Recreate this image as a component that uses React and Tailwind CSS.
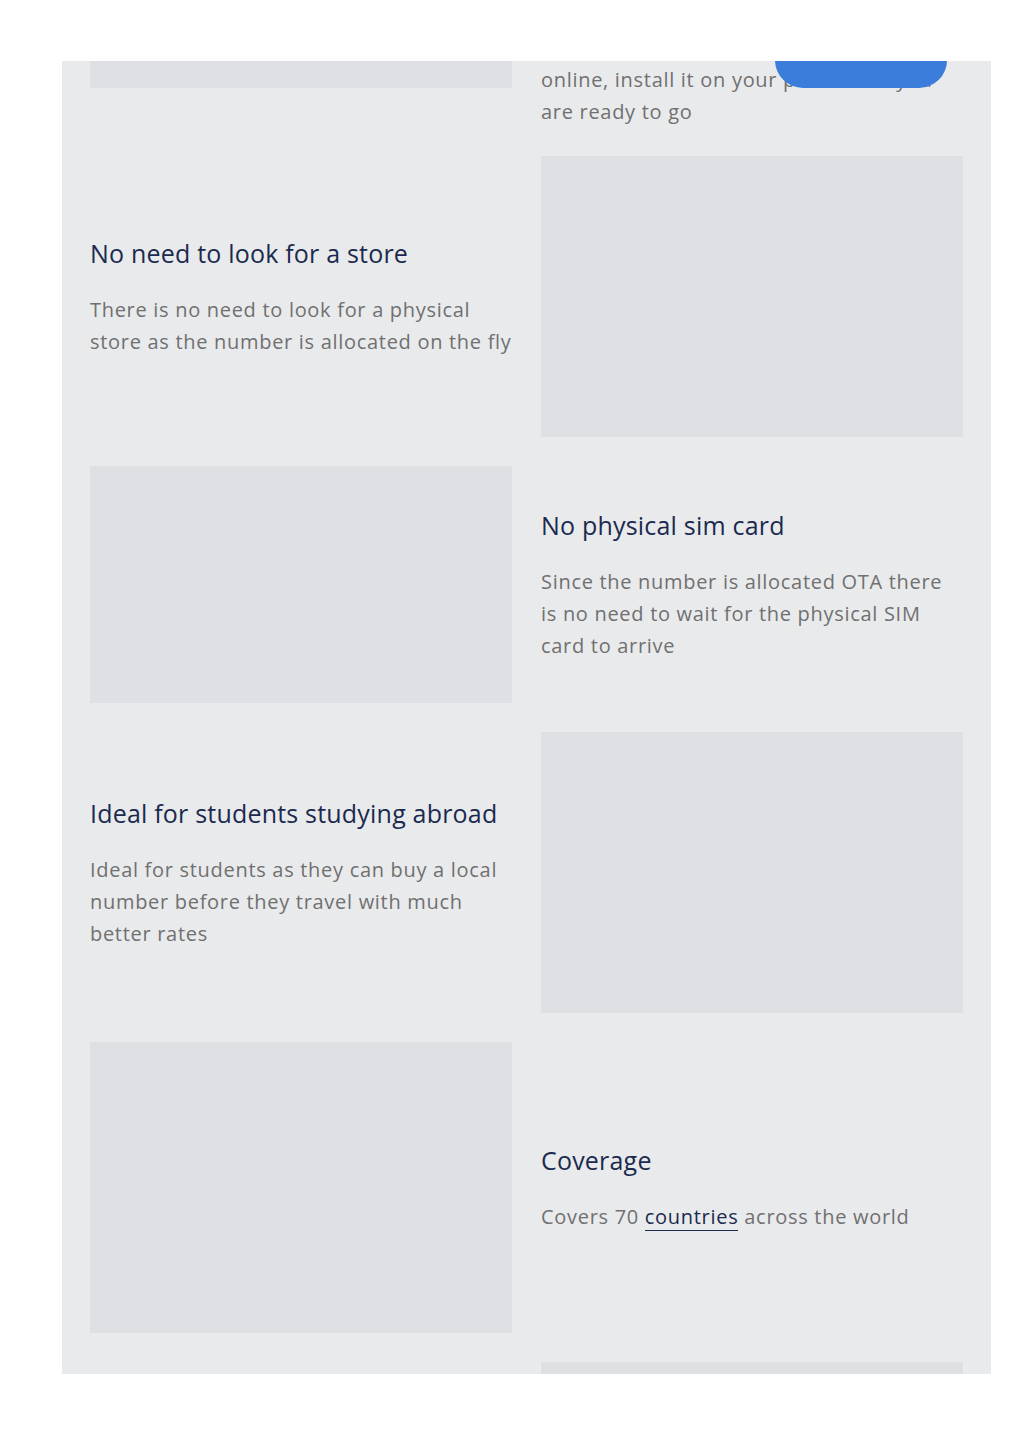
export default function App() {
  const font = { fontFamily: '"Open Sans", "Noto Sans", sans-serif' };
  const Title = ({ children }) => (
    <h3 className="text-[25px] leading-[36px] tracking-[0.2px] text-[#1b2a4e] font-normal">{children}</h3>
  );
  const Body = ({ lines }) => (
    <p className="mt-[23px] text-[20px] leading-[32px] tracking-[0.7px] text-[#707070] whitespace-nowrap">
      {lines.map((l, i) => (
        <span key={i} className="block">{l}</span>
      ))}
    </p>
  );
  const Box = ({ h }) => <div className={`w-[422px] bg-[#dfe0e3] ${h}`} />;

  return (
    <div className="w-[1024px] h-[1449px] bg-white" style={font}>
      <div className="pt-[61px] pl-[62px]">
        <div className="relative w-[929px] h-[1313px] overflow-hidden bg-[#e9eaec] px-[28px]">
          {/* row 0 (partial) */}
          <div className="flex gap-[29px] h-[66px]">
            <div className="w-[422px]">
              <div className="h-[27px] bg-[#dfe0e3]" />
            </div>
            <div className="w-[422px] pt-[3px] text-[20px] leading-[32px] tracking-[0.7px] text-[#707070] whitespace-nowrap">
              <p>online, install it on your phone and you</p>
              <p>are ready to go</p>
            </div>
          </div>

          <div className="mt-[29px] flex flex-col gap-[29px]">
            {/* row 1 */}
            <div className="flex gap-[29px] h-[281px]">
              <div className="w-[422px] flex flex-col justify-center">
                <Title>No need to look for a store</Title>
                <Body lines={["There is no need to look for a physical", "store as the number is allocated on the fly"]} />
              </div>
              <Box h="h-[281px]" />
            </div>

            {/* row 2 */}
            <div className="flex gap-[29px] h-[237px]">
              <Box h="h-[237px]" />
              <div className="w-[422px] flex flex-col justify-center">
                <Title>No physical sim card</Title>
                <Body lines={["Since the number is allocated OTA there", "is no need to wait for the physical SIM", "card to arrive"]} />
              </div>
            </div>

            {/* row 3 */}
            <div className="flex gap-[29px] h-[281px]">
              <div className="w-[422px] flex flex-col justify-center">
                <Title>Ideal for students studying abroad</Title>
                <Body lines={["Ideal for students as they can buy a local", "number before they travel with much", "better rates"]} />
              </div>
              <Box h="h-[281px]" />
            </div>

            {/* row 4 */}
            <div className="flex gap-[29px] h-[291px]">
              <Box h="h-[291px]" />
              <div className="w-[422px] flex flex-col justify-center">
                <Title>Coverage</Title>
                <p className="mt-[23px] text-[20px] leading-[32px] tracking-[0.7px] text-[#707070]">
                  Covers 70{" "}
                  <a className="text-[#1b2a4e] border-b border-[#1b2a4e]">countries</a>{" "}
                  across the world
                </p>
              </div>
            </div>

            {/* row 5 (partial) */}
            <div className="flex gap-[29px] h-[200px]">
              <div className="w-[422px]" />
              <Box h="h-[200px]" />
            </div>
          </div>

          {/* top blue button (clipped) */}
          <div className="absolute z-10 left-[713px] top-[-29px] w-[172px] h-[56px] rounded-full bg-[#3a7ddb]" />
        </div>
      </div>
    </div>
  );
}
